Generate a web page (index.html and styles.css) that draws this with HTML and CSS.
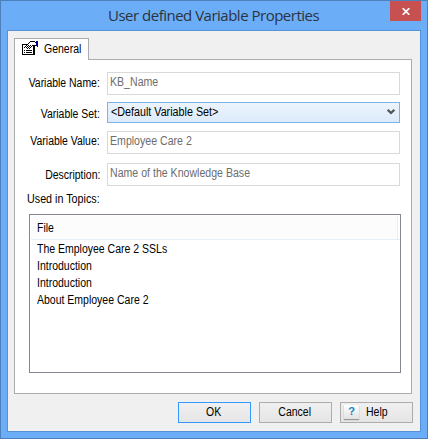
FILE: index.html
```html
<!DOCTYPE html>
<html lang="en">
<head>
<meta charset="utf-8">
<title>User defined Variable Properties</title>
<link rel="stylesheet" href="styles.css">
</head>
<body>
<div class="window">
  <header class="titlebar">
    <h1 class="title">User defined Variable Properties</h1>
    <button class="close" aria-label="Close"><svg width="8" height="7" viewBox="0 0 8 7"><path d="M.7.2 7.3 6.8M7.3.2.7 6.8" stroke="#fff" stroke-width="1.7"/></svg></button>
  </header>
  <main class="client">
    <div class="tab">
      <svg class="tab-icon" width="17" height="15" viewBox="0 0 17 15" shape-rendering="crispEdges">
        <path d="M.5 3.500h11v10H.5z" fill="#fff" stroke="#000"/>
        <path d="M12 5h1v9h-1z"/>
        <path d="M7 1h7v4h-4v2H9v1H7V6H5V4h1V2h1z" fill="#fff"/>
        <path d="M8 0h5v1H8zM7 1h1v1H7zM13 1h1v1h-1zM6 2h1v1H6zM5 3h1v1H5zM4 4h1v1H4zM3 5h1v1H3zM2 6h1v1H2zM6 4h1v1H6zM8 4h1v1H8zM7 5h1v1H7zM5 5h1v1H5zM9 5h1v1H9zM4 6h1v1H4zM6 6h1v1H6zM8 6h1v1H8zM7 7h1v1H7zM5 7h1v1H5zM10 4h4v1h-4zM2 9h1v1H2zM4 9h6v1H4zM2 11h1v1H2zM4 11h6v1H4z"/>
        <path d="M14 0h2v6h-1V5h-1z" fill="#000080"/>
      </svg>
      <span class="text">General</span>
    </div>
    <section class="panel">
      <div class="form">
        <label class="text name-label">Variable Name:</label><div class="field"><span class="text">KB_Name</span></div>
        <label class="text set-label">Variable Set:</label><div class="select"><span class="text wide">&lt;Default Variable Set&gt;</span><svg width="8" height="6" viewBox="0 0 8 6"><path d="M.7.8 4 4 7.300.8" fill="none" stroke="#555" stroke-width="2.200"/></svg></div>
        <label class="text value-label">Variable Value:</label><div class="field"><span class="text">Employee Care 2</span></div>
        <label class="text desc-label">Description:</label><div class="field"><span class="text">Name of the Knowledge Base</span></div>
      </div>
      <div class="topics-label"><span class="text wide">Used in Topics:</span></div>
      <div class="list">
        <div class="list-head"><span class="text">File</span></div>
        <div class="row row-first"><span class="text">The Employee Care 2 SSLs</span></div>
        <div class="row"><span class="text">Introduction</span></div>
        <div class="row"><span class="text">Introduction</span></div>
        <div class="row"><span class="text">About Employee Care 2</span></div>
      </div>
    </section>
    <footer class="actions">
      <button class="btn primary"><span class="text center">OK</span></button>
      <button class="btn"><span class="text center">Cancel</span></button>
      <button class="btn help"><span class="help-icon">?</span><span class="text">Help</span></button>
    </footer>
  </main>
</div>
</body>
</html>
```
FILE: styles.css
```css
* { box-sizing: border-box; }
body { margin: 0; font: 12px/13px "Liberation Sans", Arial, sans-serif; color: #000; white-space: nowrap; }
button { font: inherit; color: inherit; padding: 0; margin: 0; }
.text { display: inline-block; transform: scaleX(.875); transform-origin: left; }
.wide { transform: scaleX(.895); }
.center { transform-origin: center; }
.window { width: 428px; height: 439px; border: 1px solid #4d80bb; background: #6badf6; padding: 0 6px 6px; }
.titlebar { height: 29px; display: flex; justify-content: flex-end; }
.title { margin: 0; flex: 1; padding: 3px 0 0 101px; font: 400 15px/22px "Open Sans", sans-serif; color: #2b3441; letter-spacing: -0.5px; }
.close { width: 31px; height: 20px; border: 0; background: #c75050; display: flex; align-items: center; justify-content: center; }
.client { width: 414px; height: 402px; border: 1px solid #5591d6; background: #f0f0f0; padding: 7px 6px 0; }
.tab { width: 75px; height: 22px; margin-bottom: -1px; position: relative; border: 1px solid #acacac; border-bottom: 0; background: #fff; display: flex; align-items: center; padding: 0 0 1px 7px; gap: 5px; }
.tab-icon { flex: none; margin-top: -1px; }
.panel { width: 398px; height: 335px; border: 1px solid #acacac; background: #fff; padding: 12px 0 0 14px; }
.form { display: grid; grid-template-columns: 71px 293px; grid-template-rows: 30px 29px 32px 23px; column-gap: 7px; height: 114px; align-items: start; }
.form label { justify-self: end; transform: scaleX(.87); transform-origin: right; }
.name-label { padding-top: 5px; }
.set-label { padding-top: 6px; }
.value-label { padding-top: 4px; }
.desc-label { padding-top: 6px; }
.field { height: 23px; border: 1px solid #d9d9d9; color: #6d6d6d; padding: 3px 2px; }
.field .text { transform: scaleX(.882); }
.select { height: 21px; border: 1px solid #7eb4ea; background: linear-gradient(#ecf4fc, #dcebfc); padding: 0 4px 1px 3px; display: flex; align-items: center; justify-content: space-between; }
.topics-label { margin: 7px 0 0 -2px; height: 21px; }
.list { width: 372px; height: 159px; border: 1px solid #828790; padding: 1px; }
.list-head { height: 24px; width: 369px; background: #fcfcfc; border-bottom: 1px solid #e5effb; padding: 6px 0 0 6px; box-shadow: inset -2px 0 #fff, inset -3px 0 #e5effb; }
.row { height: 17px; padding: 2px 6px 0; }
.row-first { margin-top: 1px; }
.actions { display: flex; gap: 8px; margin: 8px 0 0 164px; }
.btn { width: 73px; height: 21px; border: 1px solid #acacac; background: linear-gradient(#f0f0f0, #e5e5e5); display: flex; align-items: center; justify-content: center; padding-right: 1px; }
.help { justify-content: flex-start; gap: 7px; padding-left: 3px; }
.primary { border-color: #3399ff; }
.help-icon { width: 15px; height: 14px; background: linear-gradient(#fff, #e2e2e2); box-shadow: 0 1px 1px #999; color: #1583c5; font: 700 11px/13px "Liberation Sans", sans-serif; text-align: center; margin-top: -2px; }
```
